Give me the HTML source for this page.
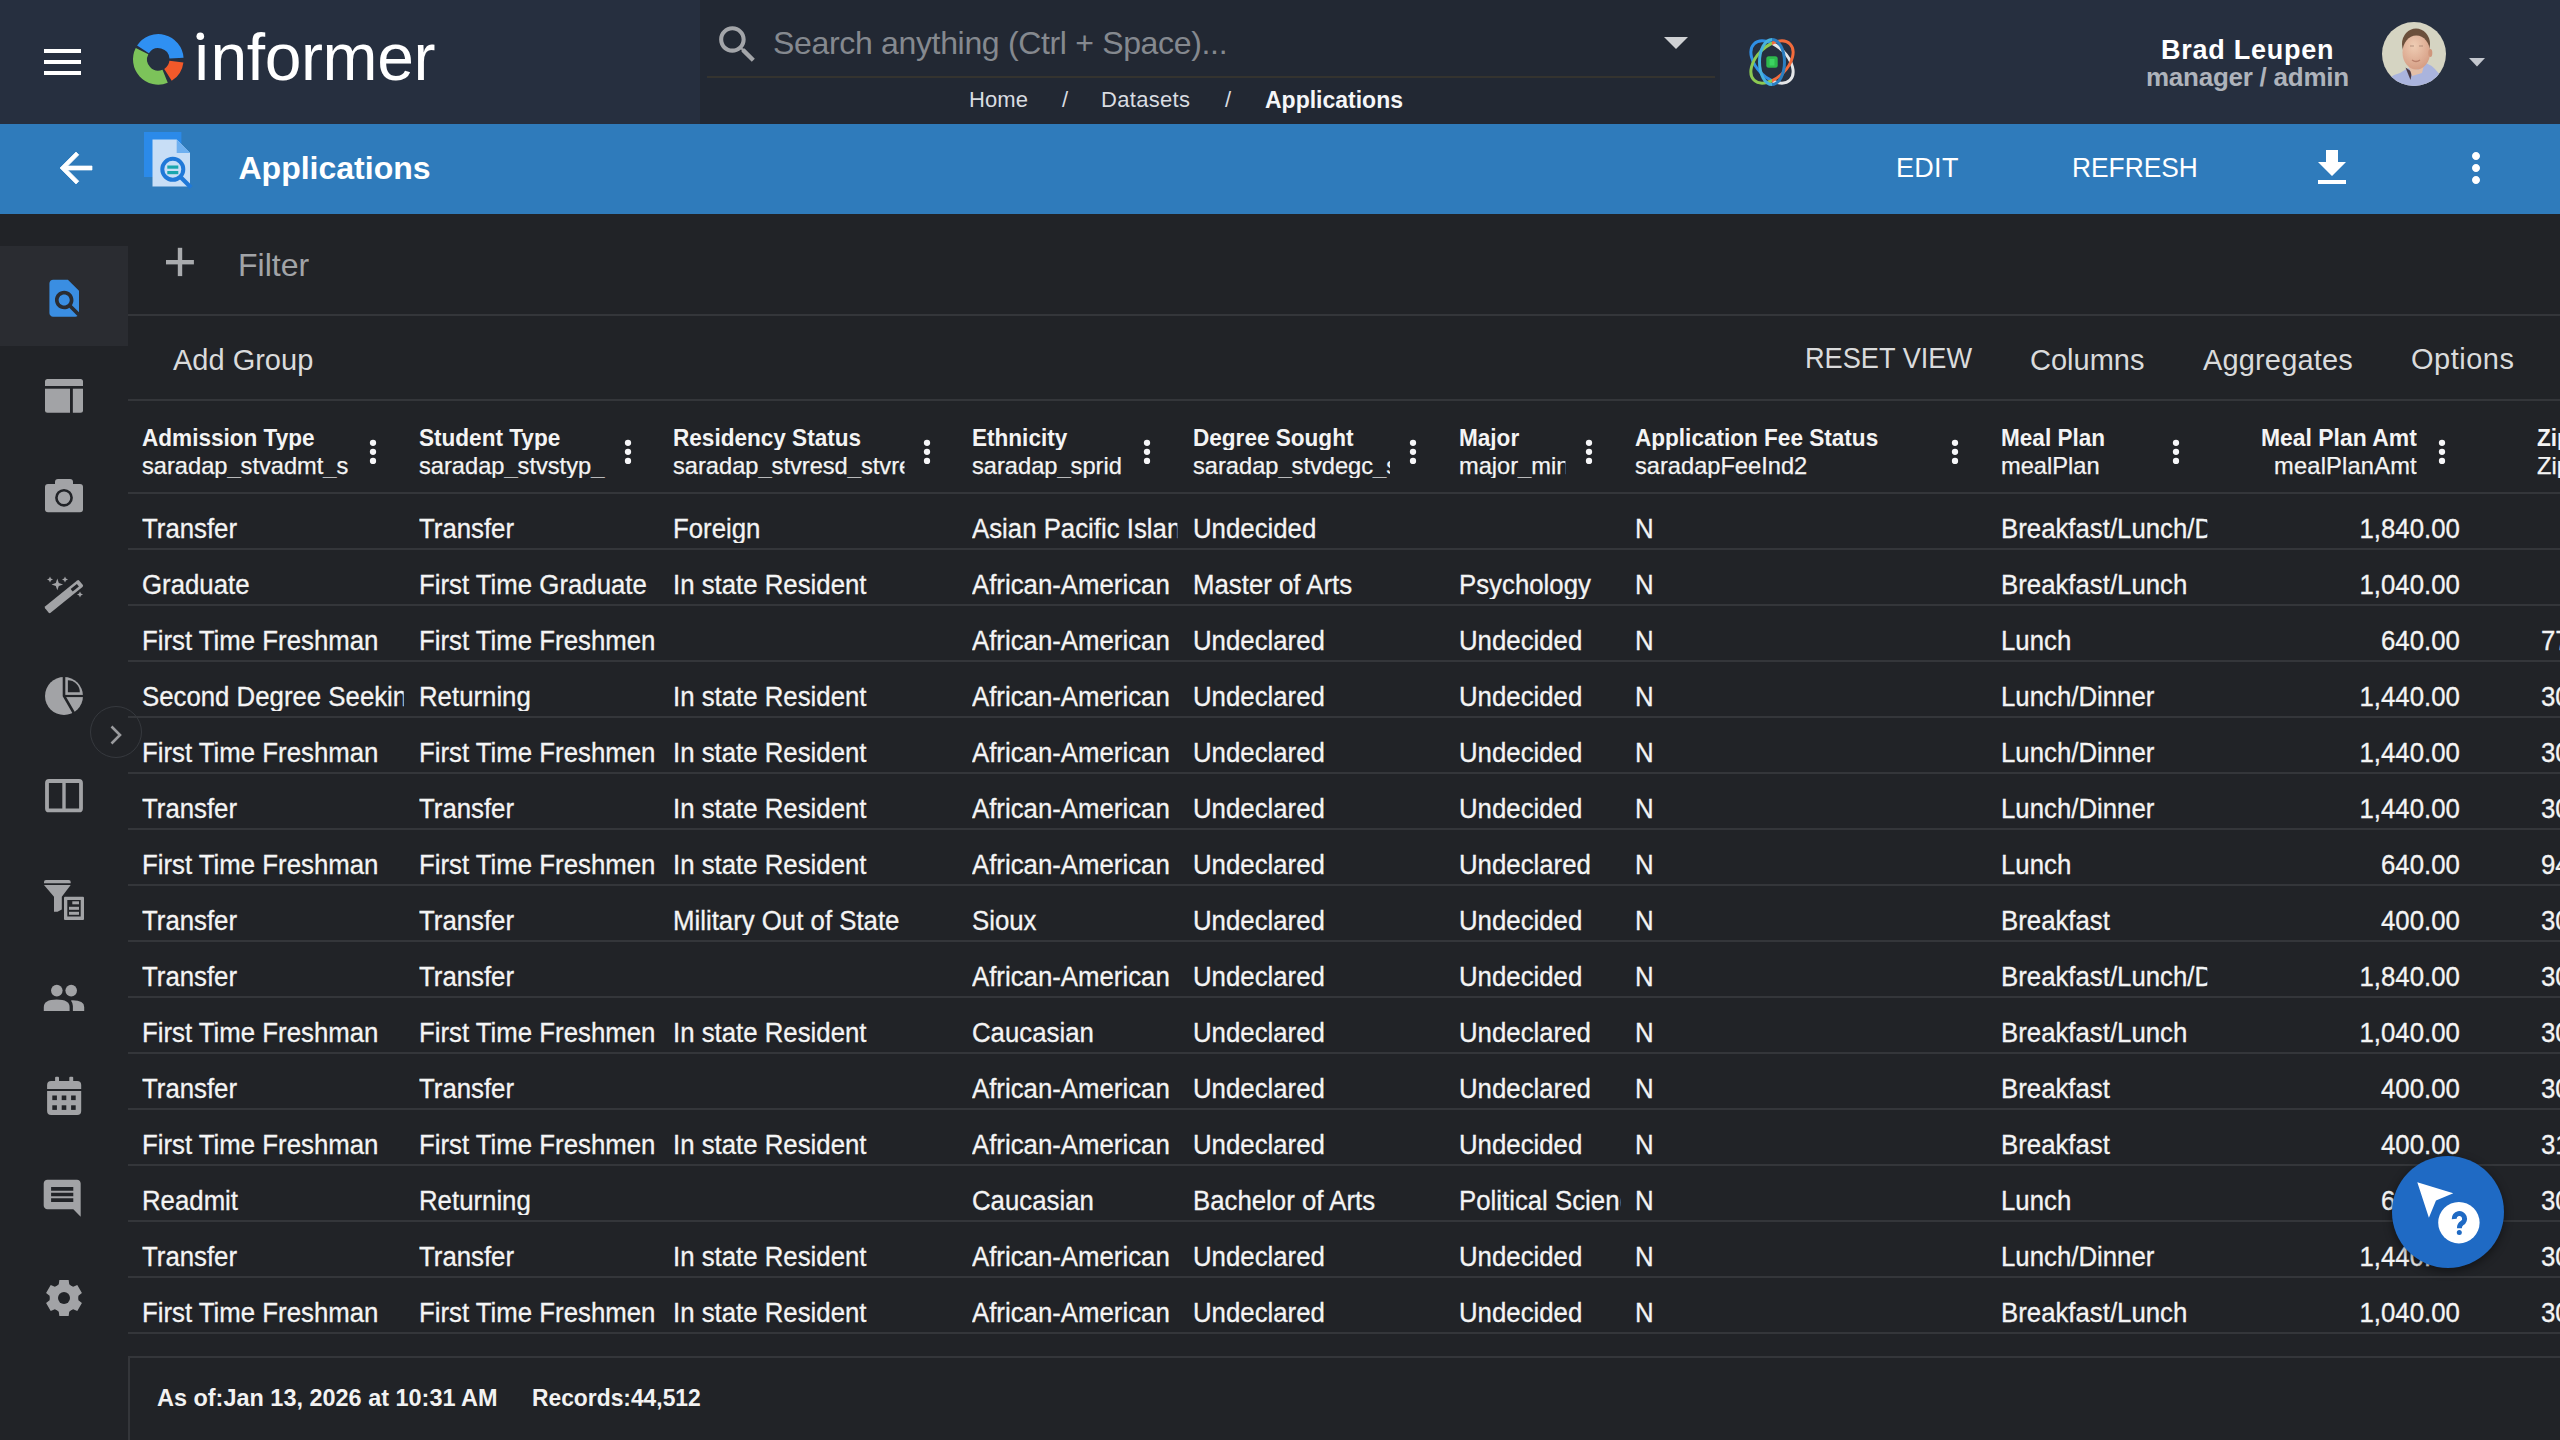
<!DOCTYPE html>
<html><head><meta charset="utf-8"><title>Informer - Applications</title>
<style>
*{box-sizing:border-box;margin:0;padding:0}
html,body{width:2560px;height:1440px;overflow:hidden;background:#212327;font-family:"Liberation Sans",sans-serif;color:#f2f2f2}
.abs{position:absolute}
.t{position:absolute;white-space:nowrap;line-height:1}
svg{position:absolute;overflow:visible}
</style></head><body>

<div class="abs" style="left:0px;top:0px;width:2560px;height:124px;background:#262f3f;"></div>
<div class="abs" style="left:700px;top:0px;width:1020px;height:124px;background:#222833;"></div>
<div class="abs" style="left:44px;top:49px;width:37px;height:4px;background:#ffffff;"></div>
<div class="abs" style="left:44px;top:60px;width:37px;height:4px;background:#ffffff;"></div>
<div class="abs" style="left:44px;top:71px;width:37px;height:4px;background:#ffffff;"></div>
<svg style="left:0;top:0" width="1" height="1">
<path d="M137.08 45.62A25.3 25.3 0 0 1 183.54 57.64L169.47 58.62A11.2 11.2 0 0 0 148.91 53.30Z" fill="#2f90f2"/>
<path d="M183.41 62.48A25.3 25.3 0 0 1 171.71 80.86L164.24 68.90A11.2 11.2 0 0 0 169.42 60.76Z" fill="#f2592a"/>
<path d="M167.78 82.86A25.3 25.3 0 0 1 135.76 47.91L148.32 54.32A11.2 11.2 0 0 0 162.50 69.78Z" fill="#7cc35a"/>
</svg>
<div class="t" style="left:192.5px;top:24.13px;font-size:66px;color:#fff;letter-spacing:-0.4px">&#305;nformer</div>
<svg style="left:0;top:0" width="1" height="1"><circle cx="200.3" cy="36.3" r="3.8" fill="#fff"/></svg>
<svg style="left:713px;top:20px" width="49" height="49" viewBox="0 0 24 24"><path fill="#a3a5a9" d="M15.5 14h-.79l-.28-.27C15.41 12.59 16 11.11 16 9.5 16 5.91 13.09 3 9.5 3S3 5.91 3 9.5 5.91 16 9.5 16c1.61 0 3.09-.59 4.23-1.57l.27.28v.79l5 4.99L20.49 19l-4.99-5zm-6 0C7.01 14 5 11.99 5 9.5S7.01 5 9.5 5 14 7.01 14 9.5 11.99 14 9.5 14z"/></svg>
<div class="t" style="left:773px;top:26.91px;font-size:32px;color:#85898f;letter-spacing:-0.33px">Search anything (Ctrl + Space)...</div>
<svg style="left:1662px;top:37px" width="28" height="13" viewBox="0 0 28 13"><path d="M2 0h24L14 12z" fill="#cfd1d4"/></svg>
<div class="abs" style="left:707px;top:76px;width:1008px;height:2px;background:#34332f;"></div>
<div class="t" style="left:969px;top:89.38px;font-size:22px;color:#d9dce1;letter-spacing:0.1px">Home</div>
<div class="t" style="left:1062px;top:89.38px;font-size:22px;color:#d9dce1">/</div>
<div class="t" style="left:1101px;top:89.38px;font-size:22px;color:#d9dce1;letter-spacing:0.3px">Datasets</div>
<div class="t" style="left:1225px;top:89.38px;font-size:22px;color:#d9dce1">/</div>
<div class="t" style="left:1265px;top:88.53px;font-size:23px;color:#f5f6f8;font-weight:bold">Applications</div>
<svg style="left:1722px;top:12px" width="100" height="100" viewBox="0 0 100 100">
<defs><clipPath id="cl"><rect x="0" y="0" width="50" height="100"/></clipPath><clipPath id="cr"><rect x="50" y="0" width="50" height="100"/></clipPath></defs>
<g fill="none" stroke-width="3">
<g clip-path="url(#cl)"><ellipse cx="50" cy="50" rx="25.5" ry="15.5" stroke="#2f8fe6" transform="rotate(45 50 50)"/><ellipse cx="50" cy="50" rx="25.5" ry="15.5" stroke="#8cc952" transform="rotate(-45 50 50)"/></g>
<g clip-path="url(#cr)"><ellipse cx="50" cy="50" rx="25.5" ry="15.5" stroke="#e4e6e8" transform="rotate(45 50 50)"/><ellipse cx="50" cy="50" rx="25.5" ry="15.5" stroke="#f26b3b" transform="rotate(-45 50 50)"/></g>
<g clip-path="url(#cl)"><ellipse cx="50" cy="50" rx="12.5" ry="22.5" stroke="#46b2de"/></g>
<g clip-path="url(#cr)"><ellipse cx="50" cy="50" rx="12.5" ry="22.5" stroke="#2b7fc2"/></g>
</g>
<rect x="44.3" y="44.3" width="11.4" height="11.4" rx="2.5" fill="#2eb84d"/>
<rect x="47.5" y="47" width="5" height="6.5" fill="#43de6a" opacity=".7"/>
</svg>
<div class="t" style="left:2161px;top:36.84px;font-size:27px;font-weight:bold;color:#fff;letter-spacing:0.75px">Brad Leupen</div>
<div class="t" style="left:2146px;top:63.79px;font-size:26px;font-weight:bold;color:#aeb3bb;letter-spacing:-0.25px">manager / admin</div>
<svg style="left:2382px;top:22px" width="64" height="64" viewBox="0 0 64 64">
<defs><clipPath id="av"><circle cx="32" cy="32" r="32"/></clipPath>
<radialGradient id="fc" cx="0.42" cy="0.3" r="0.75"><stop offset="0" stop-color="#efcdb4"/><stop offset="1" stop-color="#d49b82"/></radialGradient></defs>
<g clip-path="url(#av)">
<rect width="64" height="64" fill="#d5d4c2"/>
<path d="M0 70L2 64q3-10 16-13l8-5 7 3 11-8q10 4 16 16L70 70z" fill="#aab4dd"/>
<path d="M23.5 45.5L28.5 58L30 50z" fill="#4a3a44"/>
<path d="M26 42q6 7 12 5l4-4-2 8-10 3z" fill="#e3bfa8"/>
<ellipse cx="34" cy="22" rx="14" ry="15.5" fill="#6b503c"/>
<ellipse cx="34.3" cy="30.5" rx="13.8" ry="17" fill="url(#fc)"/>
<ellipse cx="48.3" cy="31" rx="2" ry="4" fill="#cf967c"/>
<path d="M28 24h4M37 24h4" stroke="#8a6a5a" stroke-width="1.2" opacity=".6"/>
<path d="M30 38q4 3 8 0" stroke="#a0604f" stroke-width="1.3" fill="none" opacity=".6"/>
</g></svg>
<svg style="left:2469px;top:58px" width="16" height="9" viewBox="0 0 16 9"><path d="M0 0h16L8 8.5z" fill="#c3c7ce"/></svg>
<div class="abs" style="left:0px;top:124px;width:2560px;height:90px;background:#2f7bbb;"></div>
<svg style="left:52px;top:144px" width="48" height="48" viewBox="0 0 24 24"><path fill="#fff" d="M20 11H7.83l5.59-5.59L12 4l-8 8 8 8 1.41-1.41L7.83 13H20v-2z" stroke="#fff" stroke-width="0.35"/></svg>
<svg style="left:0;top:0" width="1" height="1">
<rect x="144" y="132" width="37.4" height="45" fill="#2b8ae9"/>
<path d="M152.5 139.6H176.7L190 153V186.5H152.5Z" fill="#c8def6"/>
<path d="M176.7 139.6L190 153H176.7Z" fill="#6fb0f0"/>
<circle cx="172.8" cy="169.3" r="10.5" fill="none" stroke="#1f78d8" stroke-width="4"/>
<path d="M180 176.5L191 187.5" stroke="#1f78d8" stroke-width="4.2"/>
<rect x="167.3" y="165.5" width="11" height="3.2" fill="#19a5ae"/>
<rect x="167.3" y="171" width="11" height="3.2" fill="#19a5ae"/>
</svg>
<div class="t" style="left:238.5px;top:152.41px;font-size:32px;font-weight:bold;color:#fff">Applications</div>
<div class="t" style="left:1896px;top:155.14px;font-size:27px;color:#fff;letter-spacing:0.3px">EDIT</div>
<div class="t" style="left:2072.3px;top:155.14px;font-size:27px;transform:scaleX(0.975);transform-origin:0 0;color:#fff">REFRESH</div>
<svg style="left:2308px;top:143.7px" width="48" height="48" viewBox="0 0 24 24"><path fill="#fff" d="M19 9h-4V3H9v6H5l7 7 7-7zM5 18v2h14v-2H5z"/></svg>
<svg style="left:2452px;top:144px" width="48" height="48" viewBox="0 0 24 24"><path fill="#fff" d="M12 8c1.1 0 2-.9 2-2s-.9-2-2-2-2 .9-2 2 .9 2 2 2zm0 2c-1.1 0-2 .9-2 2s.9 2 2 2 2-.9 2-2-.9-2-2-2zm0 6c-1.1 0-2 .9-2 2s.9 2 2 2 2-.9 2-2-.9-2-2-2z"/></svg>
<div class="abs" style="left:0px;top:246px;width:128px;height:100px;background:#2a2c31;"></div>
<svg style="left:41.6px;top:275.7px" width="44.4" height="44.4" viewBox="0 0 24 24"><path fill="#3a8ee2" d="M20 19.59V8l-6-6H6c-1.1 0-1.99.9-1.99 2L4 20c0 1.1.89 2 1.99 2H18c.45 0 .85-.15 1.19-.4l-4.43-4.43c-.8.52-1.74.83-2.76.83-2.76 0-5-2.24-5-5s2.24-5 5-5 5 2.24 5 5c0 1.02-.31 1.96-.83 2.75L20 19.59zM9 13c0 1.66 1.34 3 3 3s3-1.34 3-3-1.34-3-3-3-3 1.34-3 3z"/></svg>
<svg style="left:0;top:0" width="1" height="1">
<rect x="45" y="379" width="38" height="33.8" rx="2.5" fill="#a2a3a6"/>
<rect x="45" y="386" width="38" height="2.7" fill="#212327"/>
<rect x="70" y="386" width="2.85" height="27" fill="#212327"/>
</svg>
<svg style="left:0;top:0" width="1" height="1">
<rect x="45" y="483.9" width="38" height="28.3" rx="3" fill="#a2a3a6"/>
<path d="M55 485V482q0-3 3-3H70q3 0 3 3V485z" fill="#a2a3a6"/>
<circle cx="64" cy="497.8" r="7.6" fill="none" stroke="#212327" stroke-width="2.6"/>
</svg>
<svg style="left:0;top:0" width="1" height="1">
<g transform="translate(63.9 596.6) rotate(-39)">
<rect x="-22" y="-4.2" width="44" height="8.4" rx="1.5" fill="#a2a3a6"/>
<rect x="10" y="-1.6" width="8" height="3.2" fill="#212327"/>
</g>
<path d="M57.3 578.6l1.5 4.3 4.3 1.5-4.3 1.5-1.5 4.3-1.5-4.3-4.3-1.5 4.3-1.5z" fill="#a2a3a6"/>
<path d="M50 576.5l.9 2.1 2.1.9-2.1.9-.9 2.1-.9-2.1-2.1-.9 2.1-.9z" fill="#a2a3a6"/>
<path d="M65 576.5l.9 2.1 2.1.9-2.1.9-.9 2.1-.9-2.1-2.1-.9 2.1-.9z" fill="#a2a3a6"/>
<path d="M80 591.5l.9 2.1 2.1.9-2.1.9-.9 2.1-.9-2.1-2.1-.9 2.1-.9z" fill="#a2a3a6"/>
</svg>
<svg style="left:0;top:0" width="1" height="1">
<circle cx="64" cy="696" r="19" fill="#a2a3a6"/>
<path d="M64 674V696L75 715" fill="none" stroke="#212327" stroke-width="2.6"/>
<path d="M64 696H86" stroke="#212327" stroke-width="2.2"/>
<path d="M67.9 692.2V680.3A11.9 11.9 0 0 1 79.8 692.2Z" fill="#212327"/>
</svg>
<div class="abs" style="left:90px;top:706px;width:52px;height:52px;border-radius:50%;border:1.5px solid #36393e"></div>
<svg style="left:0;top:0" width="1" height="1"><path d="M111.5 726.5l8.5 8.5-8.5 8.5" fill="none" stroke="#9a9b9e" stroke-width="2.6"/></svg>
<svg style="left:0;top:0" width="1" height="1">
<rect x="47" y="781" width="34" height="29.4" rx="2" fill="none" stroke="#a2a3a6" stroke-width="3.8"/>
<rect x="62.3" y="781" width="3.4" height="29.4" fill="#a2a3a6"/>
</svg>
<svg style="left:0;top:0" width="1" height="1">
<path d="M44 883.3V882q0-2 2-2H68.7q2 0 2 2V883.3z" fill="#a2a3a6"/>
<path d="M44 885H70.7L61.8 896.7V909.5L57.5 911.7H54V896.7z" fill="#a2a3a6"/>
<rect x="64" y="896.7" width="20" height="23.3" rx="1" fill="#a2a3a6"/>
<rect x="67.3" y="900" width="13.4" height="16.5" fill="#212327"/>
<rect x="72.3" y="901.3" width="6.7" height="3" fill="#a2a3a6"/>
<rect x="69" y="906.8" width="10" height="3" fill="#a2a3a6"/>
<rect x="69" y="911.8" width="10" height="3" fill="#a2a3a6"/>
</svg>
<svg style="left:0;top:0" width="1" height="1">
<circle cx="56.8" cy="990.6" r="5.8" fill="#a2a3a6"/>
<circle cx="71.2" cy="990.6" r="5.8" fill="#a2a3a6"/>
<path d="M43.8 1011V1007q0-7.6 12.9-7.6t12.9 7.6V1011z" fill="#a2a3a6"/>
<path d="M72.9 1011V1006q0-3-2-5.6q13.3-.5 13.3 6.6V1011z" fill="#a2a3a6"/>
</svg>
<svg style="left:0;top:0" width="1" height="1">
<path d="M47.1 1089V1085q0-4 4-4H77.2q4 0 4 4V1089z" fill="#a2a3a6"/>
<path d="M47.1 1091H81.2V1111q0 4-4 4H51.1q-4 0-4-4z" fill="#a2a3a6"/>
<rect x="55.1" y="1076.7" width="3.9" height="6" rx="1" fill="#a2a3a6"/>
<rect x="69.3" y="1076.7" width="3.9" height="6" rx="1" fill="#a2a3a6"/>
<g fill="#212327">
<rect x="52.3" y="1095.5" width="4.6" height="4.6"/><rect x="61.7" y="1095.5" width="4.6" height="4.6"/><rect x="71.1" y="1095.5" width="4.6" height="4.6"/>
<rect x="52.3" y="1105.3" width="4.6" height="4.6"/><rect x="61.7" y="1105.3" width="4.6" height="4.6"/><rect x="71.1" y="1105.3" width="4.6" height="4.6"/>
</g></svg>
<svg style="left:40.1px;top:1175.7px" width="44.4" height="44.4" viewBox="0 0 24 24"><path fill="#a2a3a6" d="M21.99 4c0-1.1-.89-2-1.99-2H4c-1.1 0-2 .9-2 2v12c0 1.1.9 2 2 2h14l4 4-.01-18zM18 14H6v-2h12v2zm0-3H6V9h12v2zm0-3H6V6h12v2z"/></svg>
<svg style="left:0;top:0" width="1" height="1"><path d="M56.90 1285.70L58.77 1284.37L59.34 1279.99L68.66 1279.99L69.23 1284.37L71.10 1285.70L73.19 1286.65L77.27 1284.96L81.92 1293.03L78.42 1295.72L78.20 1298.00L78.42 1300.28L81.92 1302.97L77.27 1311.04L73.19 1309.35L71.10 1310.30L69.23 1311.63L68.66 1316.01L59.34 1316.01L58.77 1311.63L56.90 1310.30L54.81 1309.35L50.73 1311.04L46.08 1302.97L49.58 1300.28L49.80 1298.00L49.58 1295.72L46.08 1293.03L50.73 1284.96L54.81 1286.65Z" fill="#a2a3a6"/><circle cx="64" cy="1298" r="6" fill="#212327"/></svg>
<svg style="left:0;top:0" width="1" height="1"><rect x="177.8" y="247.8" width="4.4" height="28.3" fill="#a9abae"/><rect x="166" y="260" width="27.9" height="4.4" fill="#a9abae"/></svg>
<div class="t" style="left:238px;top:248.71px;font-size:32px;color:#a2a4a7;letter-spacing:0px">Filter</div>
<div class="abs" style="left:128px;top:314px;width:2432px;height:2px;background:#34363a;"></div>
<div class="t" style="left:173px;top:345.65px;font-size:29px;color:#dadbdc">Add Group</div>
<div class="t" style="left:1804.8px;top:344.25px;font-size:29px;transform:scaleX(0.937);transform-origin:0 0;color:#dadbdc">RESET VIEW</div>
<div class="t" style="left:2030px;top:345.95px;font-size:29px;color:#dadbdc">Columns</div>
<div class="t" style="left:2203px;top:345.95px;font-size:29px;color:#dadbdc;letter-spacing:0.15px">Aggregates</div>
<div class="t" style="left:2411px;top:345.45px;font-size:29px;color:#dadbdc;letter-spacing:0.5px">Options</div>
<div class="abs" style="left:128px;top:399px;width:2432px;height:2px;background:#34363a;"></div>
<div class="t" style="left:142px;top:425.68px;font-size:24px;transform:scaleX(0.94);width:223.40px;overflow:hidden;transform-origin:0 0;font-weight:bold;color:#f4f4f4">Admission Type</div>
<div class="t" style="left:142px;top:453.68px;font-size:24px;transform:scaleX(0.985);width:213.20px;overflow:hidden;transform-origin:0 0;color:#f4f4f4;-webkit-text-stroke:0.25px #f4f4f4">saradap_stvadmt_s</div>
<svg style="left:369px;top:440px" width="8" height="25" viewBox="0 0 8 25"><circle cx="4" cy="2.8" r="3.15" fill="#f6f6f8"/><circle cx="4" cy="11.85" r="3.15" fill="#f6f6f8"/><circle cx="4" cy="20.9" r="3.15" fill="#f6f6f8"/></svg>
<div class="t" style="left:419px;top:425.68px;font-size:24px;transform:scaleX(0.94);width:198.94px;overflow:hidden;transform-origin:0 0;font-weight:bold;color:#f4f4f4">Student Type</div>
<div class="t" style="left:419px;top:453.68px;font-size:24px;transform:scaleX(0.985);width:189.85px;overflow:hidden;transform-origin:0 0;color:#f4f4f4;-webkit-text-stroke:0.25px #f4f4f4">saradap_stvstyp_</div>
<svg style="left:624px;top:440px" width="8" height="25" viewBox="0 0 8 25"><circle cx="4" cy="2.8" r="3.15" fill="#f6f6f8"/><circle cx="4" cy="11.85" r="3.15" fill="#f6f6f8"/><circle cx="4" cy="20.9" r="3.15" fill="#f6f6f8"/></svg>
<div class="t" style="left:673px;top:425.68px;font-size:24px;transform:scaleX(0.94);width:245.74px;overflow:hidden;transform-origin:0 0;font-weight:bold;color:#f4f4f4">Residency Status</div>
<div class="t" style="left:673px;top:453.68px;font-size:24px;transform:scaleX(0.985);width:234.52px;overflow:hidden;transform-origin:0 0;color:#f4f4f4;-webkit-text-stroke:0.25px #f4f4f4">saradap_stvresd_stvresd</div>
<svg style="left:923px;top:440px" width="8" height="25" viewBox="0 0 8 25"><circle cx="4" cy="2.8" r="3.15" fill="#f6f6f8"/><circle cx="4" cy="11.85" r="3.15" fill="#f6f6f8"/><circle cx="4" cy="20.9" r="3.15" fill="#f6f6f8"/></svg>
<div class="t" style="left:972px;top:425.68px;font-size:24px;transform:scaleX(0.94);width:163.83px;overflow:hidden;transform-origin:0 0;font-weight:bold;color:#f4f4f4">Ethnicity</div>
<div class="t" style="left:972px;top:453.68px;font-size:24px;transform:scaleX(0.985);width:156.35px;overflow:hidden;transform-origin:0 0;color:#f4f4f4;-webkit-text-stroke:0.25px #f4f4f4">saradap_sprid</div>
<svg style="left:1143px;top:440px" width="8" height="25" viewBox="0 0 8 25"><circle cx="4" cy="2.8" r="3.15" fill="#f6f6f8"/><circle cx="4" cy="11.85" r="3.15" fill="#f6f6f8"/><circle cx="4" cy="20.9" r="3.15" fill="#f6f6f8"/></svg>
<div class="t" style="left:1193px;top:425.68px;font-size:24px;transform:scaleX(0.94);width:209.57px;overflow:hidden;transform-origin:0 0;font-weight:bold;color:#f4f4f4">Degree Sought</div>
<div class="t" style="left:1193px;top:453.68px;font-size:24px;transform:scaleX(0.985);width:200.00px;overflow:hidden;transform-origin:0 0;color:#f4f4f4;-webkit-text-stroke:0.25px #f4f4f4">saradap_stvdegc_stvdegc</div>
<svg style="left:1409px;top:440px" width="8" height="25" viewBox="0 0 8 25"><circle cx="4" cy="2.8" r="3.15" fill="#f6f6f8"/><circle cx="4" cy="11.85" r="3.15" fill="#f6f6f8"/><circle cx="4" cy="20.9" r="3.15" fill="#f6f6f8"/></svg>
<div class="t" style="left:1459px;top:425.68px;font-size:24px;transform:scaleX(0.94);width:112.77px;overflow:hidden;transform-origin:0 0;font-weight:bold;color:#f4f4f4">Major</div>
<div class="t" style="left:1459px;top:453.68px;font-size:24px;transform:scaleX(0.985);width:107.61px;overflow:hidden;transform-origin:0 0;color:#f4f4f4;-webkit-text-stroke:0.25px #f4f4f4">major_minor</div>
<svg style="left:1585px;top:440px" width="8" height="25" viewBox="0 0 8 25"><circle cx="4" cy="2.8" r="3.15" fill="#f6f6f8"/><circle cx="4" cy="11.85" r="3.15" fill="#f6f6f8"/><circle cx="4" cy="20.9" r="3.15" fill="#f6f6f8"/></svg>
<div class="t" style="left:1635px;top:425.68px;font-size:24px;transform:scaleX(0.94);width:318.09px;overflow:hidden;transform-origin:0 0;font-weight:bold;color:#f4f4f4">Application Fee Status</div>
<div class="t" style="left:1635px;top:453.68px;font-size:24px;transform:scaleX(0.985);width:303.55px;overflow:hidden;transform-origin:0 0;color:#f4f4f4;-webkit-text-stroke:0.25px #f4f4f4">saradapFeeInd2</div>
<svg style="left:1951px;top:440px" width="8" height="25" viewBox="0 0 8 25"><circle cx="4" cy="2.8" r="3.15" fill="#f6f6f8"/><circle cx="4" cy="11.85" r="3.15" fill="#f6f6f8"/><circle cx="4" cy="20.9" r="3.15" fill="#f6f6f8"/></svg>
<div class="t" style="left:2001px;top:425.68px;font-size:24px;transform:scaleX(0.94);width:163.83px;overflow:hidden;transform-origin:0 0;font-weight:bold;color:#f4f4f4">Meal Plan</div>
<div class="t" style="left:2001px;top:453.68px;font-size:24px;transform:scaleX(0.985);width:156.35px;overflow:hidden;transform-origin:0 0;color:#f4f4f4;-webkit-text-stroke:0.25px #f4f4f4">mealPlan</div>
<svg style="left:2172px;top:440px" width="8" height="25" viewBox="0 0 8 25"><circle cx="4" cy="2.8" r="3.15" fill="#f6f6f8"/><circle cx="4" cy="11.85" r="3.15" fill="#f6f6f8"/><circle cx="4" cy="20.9" r="3.15" fill="#f6f6f8"/></svg>
<div class="t" style="left:2221.19px;top:425.68px;font-size:24px;transform:scaleX(0.955);width:195.81px;overflow:hidden;text-align:right;transform-origin:100% 0;font-weight:bold;color:#f4f4f4">Meal Plan Amt</div>
<div class="t" style="left:2227.15px;top:453.68px;font-size:24px;transform:scaleX(0.985);width:189.85px;overflow:hidden;text-align:right;transform-origin:100% 0;color:#f4f4f4;letter-spacing:0.2px;-webkit-text-stroke:0.25px #f4f4f4">mealPlanAmt</div>
<svg style="left:2438px;top:440px" width="8" height="25" viewBox="0 0 8 25"><circle cx="4" cy="2.8" r="3.15" fill="#f6f6f8"/><circle cx="4" cy="11.85" r="3.15" fill="#f6f6f8"/><circle cx="4" cy="20.9" r="3.15" fill="#f6f6f8"/></svg>
<div class="t" style="left:2537px;top:425.68px;font-size:24px;transform:scaleX(0.94);width:88.30px;overflow:hidden;transform-origin:0 0;font-weight:bold;color:#f4f4f4">Zip</div>
<div class="t" style="left:2537px;top:453.68px;font-size:24px;transform:scaleX(0.985);width:84.26px;overflow:hidden;transform-origin:0 0;color:#f4f4f4;-webkit-text-stroke:0.25px #f4f4f4">Zip</div>
<div class="abs" style="left:128px;top:492px;width:2432px;height:2px;background:#34363a;"></div>
<div class="t" style="left:142px;top:515.64px;font-size:27px;transform:scaleX(0.955);width:274.35px;overflow:hidden;transform-origin:0 0;color:#f4f4f4;-webkit-text-stroke:0.3px #f4f4f4">Transfer</div>
<div class="t" style="left:419px;top:515.64px;font-size:27px;transform:scaleX(0.955);width:250.26px;overflow:hidden;transform-origin:0 0;color:#f4f4f4;-webkit-text-stroke:0.3px #f4f4f4">Transfer</div>
<div class="t" style="left:673px;top:515.64px;font-size:27px;transform:scaleX(0.955);width:297.38px;overflow:hidden;transform-origin:0 0;color:#f4f4f4;-webkit-text-stroke:0.3px #f4f4f4">Foreign</div>
<div class="t" style="left:972px;top:515.64px;font-size:27px;transform:scaleX(0.955);width:214.66px;overflow:hidden;transform-origin:0 0;color:#f4f4f4;-webkit-text-stroke:0.3px #f4f4f4">Asian Pacific Islander</div>
<div class="t" style="left:1193px;top:515.64px;font-size:27px;transform:scaleX(0.955);width:262.83px;overflow:hidden;transform-origin:0 0;color:#f4f4f4;-webkit-text-stroke:0.3px #f4f4f4">Undecided</div>
<div class="t" style="left:1635px;top:515.64px;font-size:27px;transform:scaleX(0.955);width:371.73px;overflow:hidden;transform-origin:0 0;color:#f4f4f4;-webkit-text-stroke:0.3px #f4f4f4">N</div>
<div class="t" style="left:2001px;top:515.64px;font-size:27px;transform:scaleX(0.955);width:215.71px;overflow:hidden;transform-origin:0 0;color:#f4f4f4;-webkit-text-stroke:0.3px #f4f4f4">Breakfast/Lunch/Dinner</div>
<div class="t" style="left:2219.16px;top:515.64px;font-size:27px;transform:scaleX(0.955);width:240.84px;overflow:hidden;text-align:right;transform-origin:100% 0;color:#f4f4f4;-webkit-text-stroke:0.3px #f4f4f4">1,840.00</div>
<div class="abs" style="left:128px;top:548px;width:2432px;height:2px;background:#34363a;"></div>
<div class="t" style="left:142px;top:571.64px;font-size:27px;transform:scaleX(0.955);width:274.35px;overflow:hidden;transform-origin:0 0;color:#f4f4f4;-webkit-text-stroke:0.3px #f4f4f4">Graduate</div>
<div class="t" style="left:419px;top:571.64px;font-size:27px;transform:scaleX(0.955);width:250.26px;overflow:hidden;transform-origin:0 0;color:#f4f4f4;-webkit-text-stroke:0.3px #f4f4f4">First Time Graduate</div>
<div class="t" style="left:673px;top:571.64px;font-size:27px;transform:scaleX(0.955);width:297.38px;overflow:hidden;transform-origin:0 0;color:#f4f4f4;-webkit-text-stroke:0.3px #f4f4f4">In state Resident</div>
<div class="t" style="left:972px;top:571.64px;font-size:27px;transform:scaleX(0.955);width:214.66px;overflow:hidden;transform-origin:0 0;color:#f4f4f4;-webkit-text-stroke:0.3px #f4f4f4">African-American</div>
<div class="t" style="left:1193px;top:571.64px;font-size:27px;transform:scaleX(0.955);width:262.83px;overflow:hidden;transform-origin:0 0;color:#f4f4f4;-webkit-text-stroke:0.3px #f4f4f4">Master of Arts</div>
<div class="t" style="left:1459px;top:571.64px;font-size:27px;transform:scaleX(0.955);width:168.59px;overflow:hidden;transform-origin:0 0;color:#f4f4f4;-webkit-text-stroke:0.3px #f4f4f4">Psychology</div>
<div class="t" style="left:1635px;top:571.64px;font-size:27px;transform:scaleX(0.955);width:371.73px;overflow:hidden;transform-origin:0 0;color:#f4f4f4;-webkit-text-stroke:0.3px #f4f4f4">N</div>
<div class="t" style="left:2001px;top:571.64px;font-size:27px;transform:scaleX(0.955);width:215.71px;overflow:hidden;transform-origin:0 0;color:#f4f4f4;-webkit-text-stroke:0.3px #f4f4f4">Breakfast/Lunch</div>
<div class="t" style="left:2219.16px;top:571.64px;font-size:27px;transform:scaleX(0.955);width:240.84px;overflow:hidden;text-align:right;transform-origin:100% 0;color:#f4f4f4;-webkit-text-stroke:0.3px #f4f4f4">1,040.00</div>
<div class="abs" style="left:128px;top:604px;width:2432px;height:2px;background:#34363a;"></div>
<div class="t" style="left:142px;top:627.64px;font-size:27px;transform:scaleX(0.955);width:274.35px;overflow:hidden;transform-origin:0 0;color:#f4f4f4;-webkit-text-stroke:0.3px #f4f4f4">First Time Freshman</div>
<div class="t" style="left:419px;top:627.64px;font-size:27px;transform:scaleX(0.955);width:250.26px;overflow:hidden;transform-origin:0 0;color:#f4f4f4;-webkit-text-stroke:0.3px #f4f4f4">First Time Freshmen</div>
<div class="t" style="left:972px;top:627.64px;font-size:27px;transform:scaleX(0.955);width:214.66px;overflow:hidden;transform-origin:0 0;color:#f4f4f4;-webkit-text-stroke:0.3px #f4f4f4">African-American</div>
<div class="t" style="left:1193px;top:627.64px;font-size:27px;transform:scaleX(0.955);width:262.83px;overflow:hidden;transform-origin:0 0;color:#f4f4f4;-webkit-text-stroke:0.3px #f4f4f4">Undeclared</div>
<div class="t" style="left:1459px;top:627.64px;font-size:27px;transform:scaleX(0.955);width:168.59px;overflow:hidden;transform-origin:0 0;color:#f4f4f4;-webkit-text-stroke:0.3px #f4f4f4">Undecided</div>
<div class="t" style="left:1635px;top:627.64px;font-size:27px;transform:scaleX(0.955);width:371.73px;overflow:hidden;transform-origin:0 0;color:#f4f4f4;-webkit-text-stroke:0.3px #f4f4f4">N</div>
<div class="t" style="left:2001px;top:627.64px;font-size:27px;transform:scaleX(0.955);width:215.71px;overflow:hidden;transform-origin:0 0;color:#f4f4f4;-webkit-text-stroke:0.3px #f4f4f4">Lunch</div>
<div class="t" style="left:2219.16px;top:627.64px;font-size:27px;transform:scaleX(0.955);width:240.84px;overflow:hidden;text-align:right;transform-origin:100% 0;color:#f4f4f4;-webkit-text-stroke:0.3px #f4f4f4">640.00</div>
<div class="t" style="left:2541px;top:627.64px;font-size:27px;transform:scaleX(0.955);width:82.72px;overflow:hidden;transform-origin:0 0;color:#f4f4f4;-webkit-text-stroke:0.3px #f4f4f4">77</div>
<div class="abs" style="left:128px;top:660px;width:2432px;height:2px;background:#34363a;"></div>
<div class="t" style="left:142px;top:683.64px;font-size:27px;transform:scaleX(0.955);width:274.35px;overflow:hidden;transform-origin:0 0;color:#f4f4f4;-webkit-text-stroke:0.3px #f4f4f4">Second Degree Seeking</div>
<div class="t" style="left:419px;top:683.64px;font-size:27px;transform:scaleX(0.955);width:250.26px;overflow:hidden;transform-origin:0 0;color:#f4f4f4;-webkit-text-stroke:0.3px #f4f4f4">Returning</div>
<div class="t" style="left:673px;top:683.64px;font-size:27px;transform:scaleX(0.955);width:297.38px;overflow:hidden;transform-origin:0 0;color:#f4f4f4;-webkit-text-stroke:0.3px #f4f4f4">In state Resident</div>
<div class="t" style="left:972px;top:683.64px;font-size:27px;transform:scaleX(0.955);width:214.66px;overflow:hidden;transform-origin:0 0;color:#f4f4f4;-webkit-text-stroke:0.3px #f4f4f4">African-American</div>
<div class="t" style="left:1193px;top:683.64px;font-size:27px;transform:scaleX(0.955);width:262.83px;overflow:hidden;transform-origin:0 0;color:#f4f4f4;-webkit-text-stroke:0.3px #f4f4f4">Undeclared</div>
<div class="t" style="left:1459px;top:683.64px;font-size:27px;transform:scaleX(0.955);width:168.59px;overflow:hidden;transform-origin:0 0;color:#f4f4f4;-webkit-text-stroke:0.3px #f4f4f4">Undecided</div>
<div class="t" style="left:1635px;top:683.64px;font-size:27px;transform:scaleX(0.955);width:371.73px;overflow:hidden;transform-origin:0 0;color:#f4f4f4;-webkit-text-stroke:0.3px #f4f4f4">N</div>
<div class="t" style="left:2001px;top:683.64px;font-size:27px;transform:scaleX(0.955);width:215.71px;overflow:hidden;transform-origin:0 0;color:#f4f4f4;-webkit-text-stroke:0.3px #f4f4f4">Lunch/Dinner</div>
<div class="t" style="left:2219.16px;top:683.64px;font-size:27px;transform:scaleX(0.955);width:240.84px;overflow:hidden;text-align:right;transform-origin:100% 0;color:#f4f4f4;-webkit-text-stroke:0.3px #f4f4f4">1,440.00</div>
<div class="t" style="left:2541px;top:683.64px;font-size:27px;transform:scaleX(0.955);width:82.72px;overflow:hidden;transform-origin:0 0;color:#f4f4f4;-webkit-text-stroke:0.3px #f4f4f4">30</div>
<div class="abs" style="left:128px;top:716px;width:2432px;height:2px;background:#34363a;"></div>
<div class="t" style="left:142px;top:739.64px;font-size:27px;transform:scaleX(0.955);width:274.35px;overflow:hidden;transform-origin:0 0;color:#f4f4f4;-webkit-text-stroke:0.3px #f4f4f4">First Time Freshman</div>
<div class="t" style="left:419px;top:739.64px;font-size:27px;transform:scaleX(0.955);width:250.26px;overflow:hidden;transform-origin:0 0;color:#f4f4f4;-webkit-text-stroke:0.3px #f4f4f4">First Time Freshmen</div>
<div class="t" style="left:673px;top:739.64px;font-size:27px;transform:scaleX(0.955);width:297.38px;overflow:hidden;transform-origin:0 0;color:#f4f4f4;-webkit-text-stroke:0.3px #f4f4f4">In state Resident</div>
<div class="t" style="left:972px;top:739.64px;font-size:27px;transform:scaleX(0.955);width:214.66px;overflow:hidden;transform-origin:0 0;color:#f4f4f4;-webkit-text-stroke:0.3px #f4f4f4">African-American</div>
<div class="t" style="left:1193px;top:739.64px;font-size:27px;transform:scaleX(0.955);width:262.83px;overflow:hidden;transform-origin:0 0;color:#f4f4f4;-webkit-text-stroke:0.3px #f4f4f4">Undeclared</div>
<div class="t" style="left:1459px;top:739.64px;font-size:27px;transform:scaleX(0.955);width:168.59px;overflow:hidden;transform-origin:0 0;color:#f4f4f4;-webkit-text-stroke:0.3px #f4f4f4">Undecided</div>
<div class="t" style="left:1635px;top:739.64px;font-size:27px;transform:scaleX(0.955);width:371.73px;overflow:hidden;transform-origin:0 0;color:#f4f4f4;-webkit-text-stroke:0.3px #f4f4f4">N</div>
<div class="t" style="left:2001px;top:739.64px;font-size:27px;transform:scaleX(0.955);width:215.71px;overflow:hidden;transform-origin:0 0;color:#f4f4f4;-webkit-text-stroke:0.3px #f4f4f4">Lunch/Dinner</div>
<div class="t" style="left:2219.16px;top:739.64px;font-size:27px;transform:scaleX(0.955);width:240.84px;overflow:hidden;text-align:right;transform-origin:100% 0;color:#f4f4f4;-webkit-text-stroke:0.3px #f4f4f4">1,440.00</div>
<div class="t" style="left:2541px;top:739.64px;font-size:27px;transform:scaleX(0.955);width:82.72px;overflow:hidden;transform-origin:0 0;color:#f4f4f4;-webkit-text-stroke:0.3px #f4f4f4">30</div>
<div class="abs" style="left:128px;top:772px;width:2432px;height:2px;background:#34363a;"></div>
<div class="t" style="left:142px;top:795.64px;font-size:27px;transform:scaleX(0.955);width:274.35px;overflow:hidden;transform-origin:0 0;color:#f4f4f4;-webkit-text-stroke:0.3px #f4f4f4">Transfer</div>
<div class="t" style="left:419px;top:795.64px;font-size:27px;transform:scaleX(0.955);width:250.26px;overflow:hidden;transform-origin:0 0;color:#f4f4f4;-webkit-text-stroke:0.3px #f4f4f4">Transfer</div>
<div class="t" style="left:673px;top:795.64px;font-size:27px;transform:scaleX(0.955);width:297.38px;overflow:hidden;transform-origin:0 0;color:#f4f4f4;-webkit-text-stroke:0.3px #f4f4f4">In state Resident</div>
<div class="t" style="left:972px;top:795.64px;font-size:27px;transform:scaleX(0.955);width:214.66px;overflow:hidden;transform-origin:0 0;color:#f4f4f4;-webkit-text-stroke:0.3px #f4f4f4">African-American</div>
<div class="t" style="left:1193px;top:795.64px;font-size:27px;transform:scaleX(0.955);width:262.83px;overflow:hidden;transform-origin:0 0;color:#f4f4f4;-webkit-text-stroke:0.3px #f4f4f4">Undeclared</div>
<div class="t" style="left:1459px;top:795.64px;font-size:27px;transform:scaleX(0.955);width:168.59px;overflow:hidden;transform-origin:0 0;color:#f4f4f4;-webkit-text-stroke:0.3px #f4f4f4">Undecided</div>
<div class="t" style="left:1635px;top:795.64px;font-size:27px;transform:scaleX(0.955);width:371.73px;overflow:hidden;transform-origin:0 0;color:#f4f4f4;-webkit-text-stroke:0.3px #f4f4f4">N</div>
<div class="t" style="left:2001px;top:795.64px;font-size:27px;transform:scaleX(0.955);width:215.71px;overflow:hidden;transform-origin:0 0;color:#f4f4f4;-webkit-text-stroke:0.3px #f4f4f4">Lunch/Dinner</div>
<div class="t" style="left:2219.16px;top:795.64px;font-size:27px;transform:scaleX(0.955);width:240.84px;overflow:hidden;text-align:right;transform-origin:100% 0;color:#f4f4f4;-webkit-text-stroke:0.3px #f4f4f4">1,440.00</div>
<div class="t" style="left:2541px;top:795.64px;font-size:27px;transform:scaleX(0.955);width:82.72px;overflow:hidden;transform-origin:0 0;color:#f4f4f4;-webkit-text-stroke:0.3px #f4f4f4">30</div>
<div class="abs" style="left:128px;top:828px;width:2432px;height:2px;background:#34363a;"></div>
<div class="t" style="left:142px;top:851.64px;font-size:27px;transform:scaleX(0.955);width:274.35px;overflow:hidden;transform-origin:0 0;color:#f4f4f4;-webkit-text-stroke:0.3px #f4f4f4">First Time Freshman</div>
<div class="t" style="left:419px;top:851.64px;font-size:27px;transform:scaleX(0.955);width:250.26px;overflow:hidden;transform-origin:0 0;color:#f4f4f4;-webkit-text-stroke:0.3px #f4f4f4">First Time Freshmen</div>
<div class="t" style="left:673px;top:851.64px;font-size:27px;transform:scaleX(0.955);width:297.38px;overflow:hidden;transform-origin:0 0;color:#f4f4f4;-webkit-text-stroke:0.3px #f4f4f4">In state Resident</div>
<div class="t" style="left:972px;top:851.64px;font-size:27px;transform:scaleX(0.955);width:214.66px;overflow:hidden;transform-origin:0 0;color:#f4f4f4;-webkit-text-stroke:0.3px #f4f4f4">African-American</div>
<div class="t" style="left:1193px;top:851.64px;font-size:27px;transform:scaleX(0.955);width:262.83px;overflow:hidden;transform-origin:0 0;color:#f4f4f4;-webkit-text-stroke:0.3px #f4f4f4">Undeclared</div>
<div class="t" style="left:1459px;top:851.64px;font-size:27px;transform:scaleX(0.955);width:168.59px;overflow:hidden;transform-origin:0 0;color:#f4f4f4;-webkit-text-stroke:0.3px #f4f4f4">Undeclared</div>
<div class="t" style="left:1635px;top:851.64px;font-size:27px;transform:scaleX(0.955);width:371.73px;overflow:hidden;transform-origin:0 0;color:#f4f4f4;-webkit-text-stroke:0.3px #f4f4f4">N</div>
<div class="t" style="left:2001px;top:851.64px;font-size:27px;transform:scaleX(0.955);width:215.71px;overflow:hidden;transform-origin:0 0;color:#f4f4f4;-webkit-text-stroke:0.3px #f4f4f4">Lunch</div>
<div class="t" style="left:2219.16px;top:851.64px;font-size:27px;transform:scaleX(0.955);width:240.84px;overflow:hidden;text-align:right;transform-origin:100% 0;color:#f4f4f4;-webkit-text-stroke:0.3px #f4f4f4">640.00</div>
<div class="t" style="left:2541px;top:851.64px;font-size:27px;transform:scaleX(0.955);width:82.72px;overflow:hidden;transform-origin:0 0;color:#f4f4f4;-webkit-text-stroke:0.3px #f4f4f4">94</div>
<div class="abs" style="left:128px;top:884px;width:2432px;height:2px;background:#34363a;"></div>
<div class="t" style="left:142px;top:907.64px;font-size:27px;transform:scaleX(0.955);width:274.35px;overflow:hidden;transform-origin:0 0;color:#f4f4f4;-webkit-text-stroke:0.3px #f4f4f4">Transfer</div>
<div class="t" style="left:419px;top:907.64px;font-size:27px;transform:scaleX(0.955);width:250.26px;overflow:hidden;transform-origin:0 0;color:#f4f4f4;-webkit-text-stroke:0.3px #f4f4f4">Transfer</div>
<div class="t" style="left:673px;top:907.64px;font-size:27px;transform:scaleX(0.955);width:297.38px;overflow:hidden;transform-origin:0 0;color:#f4f4f4;-webkit-text-stroke:0.3px #f4f4f4">Military Out of State</div>
<div class="t" style="left:972px;top:907.64px;font-size:27px;transform:scaleX(0.955);width:214.66px;overflow:hidden;transform-origin:0 0;color:#f4f4f4;-webkit-text-stroke:0.3px #f4f4f4">Sioux</div>
<div class="t" style="left:1193px;top:907.64px;font-size:27px;transform:scaleX(0.955);width:262.83px;overflow:hidden;transform-origin:0 0;color:#f4f4f4;-webkit-text-stroke:0.3px #f4f4f4">Undeclared</div>
<div class="t" style="left:1459px;top:907.64px;font-size:27px;transform:scaleX(0.955);width:168.59px;overflow:hidden;transform-origin:0 0;color:#f4f4f4;-webkit-text-stroke:0.3px #f4f4f4">Undecided</div>
<div class="t" style="left:1635px;top:907.64px;font-size:27px;transform:scaleX(0.955);width:371.73px;overflow:hidden;transform-origin:0 0;color:#f4f4f4;-webkit-text-stroke:0.3px #f4f4f4">N</div>
<div class="t" style="left:2001px;top:907.64px;font-size:27px;transform:scaleX(0.955);width:215.71px;overflow:hidden;transform-origin:0 0;color:#f4f4f4;-webkit-text-stroke:0.3px #f4f4f4">Breakfast</div>
<div class="t" style="left:2219.16px;top:907.64px;font-size:27px;transform:scaleX(0.955);width:240.84px;overflow:hidden;text-align:right;transform-origin:100% 0;color:#f4f4f4;-webkit-text-stroke:0.3px #f4f4f4">400.00</div>
<div class="t" style="left:2541px;top:907.64px;font-size:27px;transform:scaleX(0.955);width:82.72px;overflow:hidden;transform-origin:0 0;color:#f4f4f4;-webkit-text-stroke:0.3px #f4f4f4">30</div>
<div class="abs" style="left:128px;top:940px;width:2432px;height:2px;background:#34363a;"></div>
<div class="t" style="left:142px;top:963.64px;font-size:27px;transform:scaleX(0.955);width:274.35px;overflow:hidden;transform-origin:0 0;color:#f4f4f4;-webkit-text-stroke:0.3px #f4f4f4">Transfer</div>
<div class="t" style="left:419px;top:963.64px;font-size:27px;transform:scaleX(0.955);width:250.26px;overflow:hidden;transform-origin:0 0;color:#f4f4f4;-webkit-text-stroke:0.3px #f4f4f4">Transfer</div>
<div class="t" style="left:972px;top:963.64px;font-size:27px;transform:scaleX(0.955);width:214.66px;overflow:hidden;transform-origin:0 0;color:#f4f4f4;-webkit-text-stroke:0.3px #f4f4f4">African-American</div>
<div class="t" style="left:1193px;top:963.64px;font-size:27px;transform:scaleX(0.955);width:262.83px;overflow:hidden;transform-origin:0 0;color:#f4f4f4;-webkit-text-stroke:0.3px #f4f4f4">Undeclared</div>
<div class="t" style="left:1459px;top:963.64px;font-size:27px;transform:scaleX(0.955);width:168.59px;overflow:hidden;transform-origin:0 0;color:#f4f4f4;-webkit-text-stroke:0.3px #f4f4f4">Undecided</div>
<div class="t" style="left:1635px;top:963.64px;font-size:27px;transform:scaleX(0.955);width:371.73px;overflow:hidden;transform-origin:0 0;color:#f4f4f4;-webkit-text-stroke:0.3px #f4f4f4">N</div>
<div class="t" style="left:2001px;top:963.64px;font-size:27px;transform:scaleX(0.955);width:215.71px;overflow:hidden;transform-origin:0 0;color:#f4f4f4;-webkit-text-stroke:0.3px #f4f4f4">Breakfast/Lunch/Dinner</div>
<div class="t" style="left:2219.16px;top:963.64px;font-size:27px;transform:scaleX(0.955);width:240.84px;overflow:hidden;text-align:right;transform-origin:100% 0;color:#f4f4f4;-webkit-text-stroke:0.3px #f4f4f4">1,840.00</div>
<div class="t" style="left:2541px;top:963.64px;font-size:27px;transform:scaleX(0.955);width:82.72px;overflow:hidden;transform-origin:0 0;color:#f4f4f4;-webkit-text-stroke:0.3px #f4f4f4">30</div>
<div class="abs" style="left:128px;top:996px;width:2432px;height:2px;background:#34363a;"></div>
<div class="t" style="left:142px;top:1019.64px;font-size:27px;transform:scaleX(0.955);width:274.35px;overflow:hidden;transform-origin:0 0;color:#f4f4f4;-webkit-text-stroke:0.3px #f4f4f4">First Time Freshman</div>
<div class="t" style="left:419px;top:1019.64px;font-size:27px;transform:scaleX(0.955);width:250.26px;overflow:hidden;transform-origin:0 0;color:#f4f4f4;-webkit-text-stroke:0.3px #f4f4f4">First Time Freshmen</div>
<div class="t" style="left:673px;top:1019.64px;font-size:27px;transform:scaleX(0.955);width:297.38px;overflow:hidden;transform-origin:0 0;color:#f4f4f4;-webkit-text-stroke:0.3px #f4f4f4">In state Resident</div>
<div class="t" style="left:972px;top:1019.64px;font-size:27px;transform:scaleX(0.955);width:214.66px;overflow:hidden;transform-origin:0 0;color:#f4f4f4;-webkit-text-stroke:0.3px #f4f4f4">Caucasian</div>
<div class="t" style="left:1193px;top:1019.64px;font-size:27px;transform:scaleX(0.955);width:262.83px;overflow:hidden;transform-origin:0 0;color:#f4f4f4;-webkit-text-stroke:0.3px #f4f4f4">Undeclared</div>
<div class="t" style="left:1459px;top:1019.64px;font-size:27px;transform:scaleX(0.955);width:168.59px;overflow:hidden;transform-origin:0 0;color:#f4f4f4;-webkit-text-stroke:0.3px #f4f4f4">Undeclared</div>
<div class="t" style="left:1635px;top:1019.64px;font-size:27px;transform:scaleX(0.955);width:371.73px;overflow:hidden;transform-origin:0 0;color:#f4f4f4;-webkit-text-stroke:0.3px #f4f4f4">N</div>
<div class="t" style="left:2001px;top:1019.64px;font-size:27px;transform:scaleX(0.955);width:215.71px;overflow:hidden;transform-origin:0 0;color:#f4f4f4;-webkit-text-stroke:0.3px #f4f4f4">Breakfast/Lunch</div>
<div class="t" style="left:2219.16px;top:1019.64px;font-size:27px;transform:scaleX(0.955);width:240.84px;overflow:hidden;text-align:right;transform-origin:100% 0;color:#f4f4f4;-webkit-text-stroke:0.3px #f4f4f4">1,040.00</div>
<div class="t" style="left:2541px;top:1019.64px;font-size:27px;transform:scaleX(0.955);width:82.72px;overflow:hidden;transform-origin:0 0;color:#f4f4f4;-webkit-text-stroke:0.3px #f4f4f4">30</div>
<div class="abs" style="left:128px;top:1052px;width:2432px;height:2px;background:#34363a;"></div>
<div class="t" style="left:142px;top:1075.64px;font-size:27px;transform:scaleX(0.955);width:274.35px;overflow:hidden;transform-origin:0 0;color:#f4f4f4;-webkit-text-stroke:0.3px #f4f4f4">Transfer</div>
<div class="t" style="left:419px;top:1075.64px;font-size:27px;transform:scaleX(0.955);width:250.26px;overflow:hidden;transform-origin:0 0;color:#f4f4f4;-webkit-text-stroke:0.3px #f4f4f4">Transfer</div>
<div class="t" style="left:972px;top:1075.64px;font-size:27px;transform:scaleX(0.955);width:214.66px;overflow:hidden;transform-origin:0 0;color:#f4f4f4;-webkit-text-stroke:0.3px #f4f4f4">African-American</div>
<div class="t" style="left:1193px;top:1075.64px;font-size:27px;transform:scaleX(0.955);width:262.83px;overflow:hidden;transform-origin:0 0;color:#f4f4f4;-webkit-text-stroke:0.3px #f4f4f4">Undeclared</div>
<div class="t" style="left:1459px;top:1075.64px;font-size:27px;transform:scaleX(0.955);width:168.59px;overflow:hidden;transform-origin:0 0;color:#f4f4f4;-webkit-text-stroke:0.3px #f4f4f4">Undeclared</div>
<div class="t" style="left:1635px;top:1075.64px;font-size:27px;transform:scaleX(0.955);width:371.73px;overflow:hidden;transform-origin:0 0;color:#f4f4f4;-webkit-text-stroke:0.3px #f4f4f4">N</div>
<div class="t" style="left:2001px;top:1075.64px;font-size:27px;transform:scaleX(0.955);width:215.71px;overflow:hidden;transform-origin:0 0;color:#f4f4f4;-webkit-text-stroke:0.3px #f4f4f4">Breakfast</div>
<div class="t" style="left:2219.16px;top:1075.64px;font-size:27px;transform:scaleX(0.955);width:240.84px;overflow:hidden;text-align:right;transform-origin:100% 0;color:#f4f4f4;-webkit-text-stroke:0.3px #f4f4f4">400.00</div>
<div class="t" style="left:2541px;top:1075.64px;font-size:27px;transform:scaleX(0.955);width:82.72px;overflow:hidden;transform-origin:0 0;color:#f4f4f4;-webkit-text-stroke:0.3px #f4f4f4">30</div>
<div class="abs" style="left:128px;top:1108px;width:2432px;height:2px;background:#34363a;"></div>
<div class="t" style="left:142px;top:1131.64px;font-size:27px;transform:scaleX(0.955);width:274.35px;overflow:hidden;transform-origin:0 0;color:#f4f4f4;-webkit-text-stroke:0.3px #f4f4f4">First Time Freshman</div>
<div class="t" style="left:419px;top:1131.64px;font-size:27px;transform:scaleX(0.955);width:250.26px;overflow:hidden;transform-origin:0 0;color:#f4f4f4;-webkit-text-stroke:0.3px #f4f4f4">First Time Freshmen</div>
<div class="t" style="left:673px;top:1131.64px;font-size:27px;transform:scaleX(0.955);width:297.38px;overflow:hidden;transform-origin:0 0;color:#f4f4f4;-webkit-text-stroke:0.3px #f4f4f4">In state Resident</div>
<div class="t" style="left:972px;top:1131.64px;font-size:27px;transform:scaleX(0.955);width:214.66px;overflow:hidden;transform-origin:0 0;color:#f4f4f4;-webkit-text-stroke:0.3px #f4f4f4">African-American</div>
<div class="t" style="left:1193px;top:1131.64px;font-size:27px;transform:scaleX(0.955);width:262.83px;overflow:hidden;transform-origin:0 0;color:#f4f4f4;-webkit-text-stroke:0.3px #f4f4f4">Undeclared</div>
<div class="t" style="left:1459px;top:1131.64px;font-size:27px;transform:scaleX(0.955);width:168.59px;overflow:hidden;transform-origin:0 0;color:#f4f4f4;-webkit-text-stroke:0.3px #f4f4f4">Undecided</div>
<div class="t" style="left:1635px;top:1131.64px;font-size:27px;transform:scaleX(0.955);width:371.73px;overflow:hidden;transform-origin:0 0;color:#f4f4f4;-webkit-text-stroke:0.3px #f4f4f4">N</div>
<div class="t" style="left:2001px;top:1131.64px;font-size:27px;transform:scaleX(0.955);width:215.71px;overflow:hidden;transform-origin:0 0;color:#f4f4f4;-webkit-text-stroke:0.3px #f4f4f4">Breakfast</div>
<div class="t" style="left:2219.16px;top:1131.64px;font-size:27px;transform:scaleX(0.955);width:240.84px;overflow:hidden;text-align:right;transform-origin:100% 0;color:#f4f4f4;-webkit-text-stroke:0.3px #f4f4f4">400.00</div>
<div class="t" style="left:2541px;top:1131.64px;font-size:27px;transform:scaleX(0.955);width:82.72px;overflow:hidden;transform-origin:0 0;color:#f4f4f4;-webkit-text-stroke:0.3px #f4f4f4">31</div>
<div class="abs" style="left:128px;top:1164px;width:2432px;height:2px;background:#34363a;"></div>
<div class="t" style="left:142px;top:1187.64px;font-size:27px;transform:scaleX(0.955);width:274.35px;overflow:hidden;transform-origin:0 0;color:#f4f4f4;-webkit-text-stroke:0.3px #f4f4f4">Readmit</div>
<div class="t" style="left:419px;top:1187.64px;font-size:27px;transform:scaleX(0.955);width:250.26px;overflow:hidden;transform-origin:0 0;color:#f4f4f4;-webkit-text-stroke:0.3px #f4f4f4">Returning</div>
<div class="t" style="left:972px;top:1187.64px;font-size:27px;transform:scaleX(0.955);width:214.66px;overflow:hidden;transform-origin:0 0;color:#f4f4f4;-webkit-text-stroke:0.3px #f4f4f4">Caucasian</div>
<div class="t" style="left:1193px;top:1187.64px;font-size:27px;transform:scaleX(0.955);width:262.83px;overflow:hidden;transform-origin:0 0;color:#f4f4f4;-webkit-text-stroke:0.3px #f4f4f4">Bachelor of Arts</div>
<div class="t" style="left:1459px;top:1187.64px;font-size:27px;transform:scaleX(0.955);width:168.59px;overflow:hidden;transform-origin:0 0;color:#f4f4f4;-webkit-text-stroke:0.3px #f4f4f4">Political Science</div>
<div class="t" style="left:1635px;top:1187.64px;font-size:27px;transform:scaleX(0.955);width:371.73px;overflow:hidden;transform-origin:0 0;color:#f4f4f4;-webkit-text-stroke:0.3px #f4f4f4">N</div>
<div class="t" style="left:2001px;top:1187.64px;font-size:27px;transform:scaleX(0.955);width:215.71px;overflow:hidden;transform-origin:0 0;color:#f4f4f4;-webkit-text-stroke:0.3px #f4f4f4">Lunch</div>
<div class="t" style="left:2219.16px;top:1187.64px;font-size:27px;transform:scaleX(0.955);width:240.84px;overflow:hidden;text-align:right;transform-origin:100% 0;color:#f4f4f4;-webkit-text-stroke:0.3px #f4f4f4">640.00</div>
<div class="t" style="left:2541px;top:1187.64px;font-size:27px;transform:scaleX(0.955);width:82.72px;overflow:hidden;transform-origin:0 0;color:#f4f4f4;-webkit-text-stroke:0.3px #f4f4f4">30</div>
<div class="abs" style="left:128px;top:1220px;width:2432px;height:2px;background:#34363a;"></div>
<div class="t" style="left:142px;top:1243.64px;font-size:27px;transform:scaleX(0.955);width:274.35px;overflow:hidden;transform-origin:0 0;color:#f4f4f4;-webkit-text-stroke:0.3px #f4f4f4">Transfer</div>
<div class="t" style="left:419px;top:1243.64px;font-size:27px;transform:scaleX(0.955);width:250.26px;overflow:hidden;transform-origin:0 0;color:#f4f4f4;-webkit-text-stroke:0.3px #f4f4f4">Transfer</div>
<div class="t" style="left:673px;top:1243.64px;font-size:27px;transform:scaleX(0.955);width:297.38px;overflow:hidden;transform-origin:0 0;color:#f4f4f4;-webkit-text-stroke:0.3px #f4f4f4">In state Resident</div>
<div class="t" style="left:972px;top:1243.64px;font-size:27px;transform:scaleX(0.955);width:214.66px;overflow:hidden;transform-origin:0 0;color:#f4f4f4;-webkit-text-stroke:0.3px #f4f4f4">African-American</div>
<div class="t" style="left:1193px;top:1243.64px;font-size:27px;transform:scaleX(0.955);width:262.83px;overflow:hidden;transform-origin:0 0;color:#f4f4f4;-webkit-text-stroke:0.3px #f4f4f4">Undeclared</div>
<div class="t" style="left:1459px;top:1243.64px;font-size:27px;transform:scaleX(0.955);width:168.59px;overflow:hidden;transform-origin:0 0;color:#f4f4f4;-webkit-text-stroke:0.3px #f4f4f4">Undecided</div>
<div class="t" style="left:1635px;top:1243.64px;font-size:27px;transform:scaleX(0.955);width:371.73px;overflow:hidden;transform-origin:0 0;color:#f4f4f4;-webkit-text-stroke:0.3px #f4f4f4">N</div>
<div class="t" style="left:2001px;top:1243.64px;font-size:27px;transform:scaleX(0.955);width:215.71px;overflow:hidden;transform-origin:0 0;color:#f4f4f4;-webkit-text-stroke:0.3px #f4f4f4">Lunch/Dinner</div>
<div class="t" style="left:2219.16px;top:1243.64px;font-size:27px;transform:scaleX(0.955);width:240.84px;overflow:hidden;text-align:right;transform-origin:100% 0;color:#f4f4f4;-webkit-text-stroke:0.3px #f4f4f4">1,440.00</div>
<div class="t" style="left:2541px;top:1243.64px;font-size:27px;transform:scaleX(0.955);width:82.72px;overflow:hidden;transform-origin:0 0;color:#f4f4f4;-webkit-text-stroke:0.3px #f4f4f4">30</div>
<div class="abs" style="left:128px;top:1276px;width:2432px;height:2px;background:#34363a;"></div>
<div class="t" style="left:142px;top:1299.64px;font-size:27px;transform:scaleX(0.955);width:274.35px;overflow:hidden;transform-origin:0 0;color:#f4f4f4;-webkit-text-stroke:0.3px #f4f4f4">First Time Freshman</div>
<div class="t" style="left:419px;top:1299.64px;font-size:27px;transform:scaleX(0.955);width:250.26px;overflow:hidden;transform-origin:0 0;color:#f4f4f4;-webkit-text-stroke:0.3px #f4f4f4">First Time Freshmen</div>
<div class="t" style="left:673px;top:1299.64px;font-size:27px;transform:scaleX(0.955);width:297.38px;overflow:hidden;transform-origin:0 0;color:#f4f4f4;-webkit-text-stroke:0.3px #f4f4f4">In state Resident</div>
<div class="t" style="left:972px;top:1299.64px;font-size:27px;transform:scaleX(0.955);width:214.66px;overflow:hidden;transform-origin:0 0;color:#f4f4f4;-webkit-text-stroke:0.3px #f4f4f4">African-American</div>
<div class="t" style="left:1193px;top:1299.64px;font-size:27px;transform:scaleX(0.955);width:262.83px;overflow:hidden;transform-origin:0 0;color:#f4f4f4;-webkit-text-stroke:0.3px #f4f4f4">Undeclared</div>
<div class="t" style="left:1459px;top:1299.64px;font-size:27px;transform:scaleX(0.955);width:168.59px;overflow:hidden;transform-origin:0 0;color:#f4f4f4;-webkit-text-stroke:0.3px #f4f4f4">Undecided</div>
<div class="t" style="left:1635px;top:1299.64px;font-size:27px;transform:scaleX(0.955);width:371.73px;overflow:hidden;transform-origin:0 0;color:#f4f4f4;-webkit-text-stroke:0.3px #f4f4f4">N</div>
<div class="t" style="left:2001px;top:1299.64px;font-size:27px;transform:scaleX(0.955);width:215.71px;overflow:hidden;transform-origin:0 0;color:#f4f4f4;-webkit-text-stroke:0.3px #f4f4f4">Breakfast/Lunch</div>
<div class="t" style="left:2219.16px;top:1299.64px;font-size:27px;transform:scaleX(0.955);width:240.84px;overflow:hidden;text-align:right;transform-origin:100% 0;color:#f4f4f4;-webkit-text-stroke:0.3px #f4f4f4">1,040.00</div>
<div class="t" style="left:2541px;top:1299.64px;font-size:27px;transform:scaleX(0.955);width:82.72px;overflow:hidden;transform-origin:0 0;color:#f4f4f4;-webkit-text-stroke:0.3px #f4f4f4">30</div>
<div class="abs" style="left:128px;top:1332px;width:2432px;height:2px;background:#34363a;"></div>
<div class="abs" style="left:128px;top:1356px;width:2440px;height:100px;border:2px solid #34363a"></div>
<div class="t" style="left:157.4px;top:1385.68px;font-size:24px;transform:scaleX(0.977);transform-origin:0 0;font-weight:bold;color:#f2f2f2">As of:Jan 13, 2026 at 10:31 AM</div>
<div class="t" style="left:531.5px;top:1385.68px;font-size:24px;transform:scaleX(0.951);transform-origin:0 0;font-weight:bold;color:#f2f2f2">Records:44,512</div>
<div class="abs" style="left:2392px;top:1156px;width:112px;height:112px;border-radius:50%;background:#1f6ac4;box-shadow:0 3px 10px rgba(0,0,0,.45)"></div>
<svg style="left:0;top:0" width="1" height="1">
<path d="M2417.3 1182.2L2453.3 1193.3L2436 1200.5L2428.9 1217.8Z" fill="#fff"/>
<circle cx="2458.9" cy="1222.7" r="20.7" fill="#fff"/>
<path d="M2454.2 1219A5.2 5.2 0 1 1 2462 1223.2Q2459.4 1224.8 2459.4 1228.2" fill="none" stroke="#1f6ac4" stroke-width="4.9"/><circle cx="2459.3" cy="1232.6" r="2.5" fill="#1f6ac4"/>
</svg>
</body></html>
